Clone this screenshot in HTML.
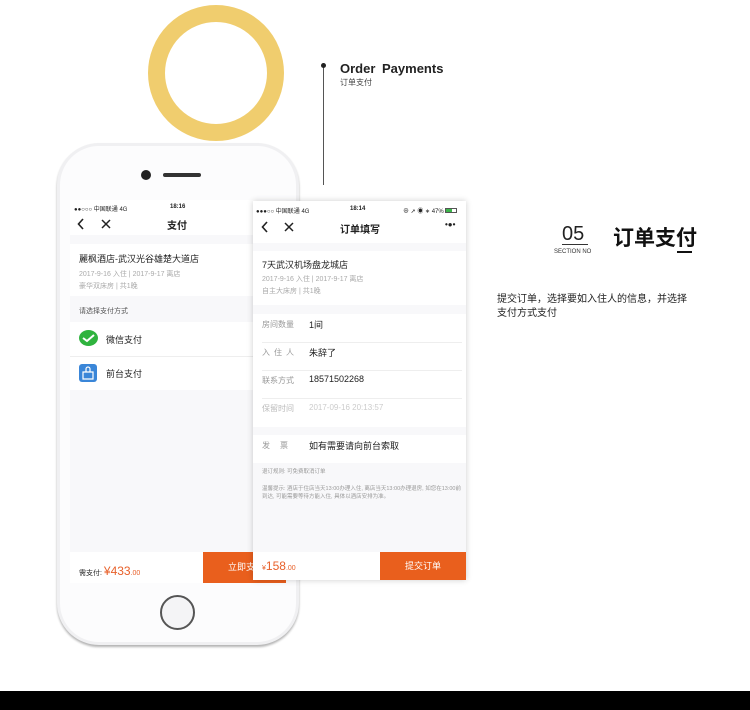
<!DOCTYPE html>
<html><head><meta charset="utf-8"><style>
*{margin:0;padding:0;box-sizing:border-box}
body{width:750px;height:710px;background:#fff;position:relative;overflow:hidden;font-family:"Liberation Sans","Noto Sans CJK SC",sans-serif;color:#222}
.a{position:absolute}
.ring{left:148px;top:5px;width:136px;height:136px;border-radius:50%;border:17px solid #f0cd6e}
.phone{left:57px;top:143px;width:242px;height:502px;border-radius:42px;background:#fcfcfd;border:3px solid #f0f0f2;box-shadow:0 2px 2px rgba(0,0,0,.3)}
.scr{background:#f8f8fa;overflow:hidden}
.t{font-size:9px}
.g{color:#aaa;font-size:7px}
.line{left:323px;top:66px;width:1px;height:119px;background:#555}
</style></head><body>
<div class="a ring"></div>
<div class="a line"></div>
<div class="a" style="left:321px;top:63px;width:5px;height:5px;border-radius:50%;background:#222"></div>
<div class="a" style="left:340px;top:61px;font-size:13px;font-weight:bold;word-spacing:3px">Order Payments</div>
<div class="a" style="left:340px;top:77px;font-size:8px;color:#444">订单支付</div>

<div class="a phone"></div>
<div class="a" style="left:141px;top:170px;width:10px;height:10px;border-radius:50%;background:#222"></div>
<div class="a" style="left:163px;top:173px;width:38px;height:4px;border-radius:2px;background:#333"></div>
<div class="a" style="left:160px;top:595px;width:35px;height:35px;border-radius:50%;border:2px solid #555;background:#f4f4f6"></div>

<!-- left screen -->
<div class="a scr" style="left:70px;top:200px;width:216px;height:383px">
 <div class="a" style="left:0;top:0;width:216px;height:35px;background:#fff"></div>
 <div class="a" style="left:4px;top:4px;font-size:6px">●●○○○ 中国联通 4G</div>
 <div class="a" style="left:100px;top:4px;font-size:6px;font-weight:bold">18:16</div>
 <svg class="a" style="left:7px;top:18px" width="8" height="12"><path d="M6 1 L1.5 6 L6 11" stroke="#222" stroke-width="1.6" fill="none"/></svg>
 <svg class="a" style="left:31px;top:19px" width="10" height="10"><path d="M1 1L9 9M9 1L1 9" stroke="#222" stroke-width="1.5"/></svg>
 <div class="a" style="left:97px;top:17px;font-size:10px;font-weight:bold">支付</div>
 <div class="a" style="left:0;top:44px;width:216px;height:52px;background:#fff"></div>
 <div class="a t" style="left:9px;top:52px">麗枫酒店-武汉光谷雄楚大道店</div>
 <div class="a g" style="left:9px;top:69px">2017-9-16 入住 | 2017-9-17 离店</div>
 <div class="a g" style="left:9px;top:81px">豪华双床房 | 共1晚</div>
 <div class="a" style="left:9px;top:106px;font-size:7px;color:#555">请选择支付方式</div>
 <div class="a" style="left:0;top:122px;width:216px;height:68px;background:#fff"></div>
 <div class="a" style="left:0;top:156px;width:216px;height:1px;background:#eee"></div>
 <div class="a" style="left:9px;top:130px;width:19px;height:16px;border-radius:50%;background:#2fb33e"></div>
 <svg class="a" style="left:12px;top:133px" width="13" height="10"><path d="M1 5 L5 8 L12 2" stroke="#fff" stroke-width="2" fill="none"/></svg>
 <div class="a t" style="left:36px;top:133px">微信支付</div>
 <div class="a" style="left:9px;top:164px;width:18px;height:18px;border-radius:3px;background:#3a86d8"></div>
 <svg class="a" style="left:12px;top:166px" width="12" height="14"><path d="M1 6H11V13H1Z M4 6V3 A2 2 0 0 1 8 3V6" stroke="#fff" stroke-width="1.2" fill="none"/></svg>
 <div class="a t" style="left:36px;top:167px">前台支付</div>
 <div class="a" style="left:0;top:352px;width:216px;height:31px;background:#fff"></div>
 <div class="a" style="left:9px;top:364px;font-size:7px">需支付: <span style="color:#e8602a;font-size:12px">¥433</span><span style="color:#e8602a;font-size:7px">.00</span></div>
 <div class="a" style="left:133px;top:352px;width:83px;height:31px;background:#e95f1d;color:#fff;font-size:9px;line-height:31px;padding-left:25px">立即支付</div>
</div>

<!-- right screen -->
<div class="a scr" style="left:253px;top:201px;width:213px;height:379px;box-shadow:0 0 6px rgba(0,0,0,.2)">
 <div class="a" style="left:0;top:0;width:213px;height:42px;background:#fff"></div>
 <div class="a" style="left:3px;top:5px;font-size:6px">●●●○○ 中国联通 4G</div>
 <div class="a" style="left:97px;top:5px;font-size:6px;font-weight:bold">18:14</div>
 <div class="a" style="left:150px;top:5px;font-size:6px">⊕ ➚ ◉ ∗ 47% <span style="display:inline-block;width:12px;height:5px;border:1px solid #555;background:linear-gradient(90deg,#3bb54a 60%,#fff 60%)"></span></div>
 <svg class="a" style="left:8px;top:20px" width="8" height="12"><path d="M6 1 L1.5 6 L6 11" stroke="#222" stroke-width="1.6" fill="none"/></svg>
 <svg class="a" style="left:31px;top:21px" width="10" height="10"><path d="M1 1L9 9M9 1L1 9" stroke="#222" stroke-width="1.5"/></svg>
 <div class="a" style="left:87px;top:20px;font-size:10px;font-weight:bold">订单填写</div>
 <div class="a" style="left:192px;top:19px;font-size:8px;font-weight:bold">•●•</div>
 <div class="a" style="left:0;top:50px;width:213px;height:54px;background:#fff"></div>
 <div class="a t" style="left:9px;top:57px">7天武汉机场盘龙城店</div>
 <div class="a g" style="left:9px;top:73px">2017-9-16 入住 | 2017-9-17 离店</div>
 <div class="a g" style="left:9px;top:85px">自主大床房 | 共1晚</div>
 <div class="a" style="left:0;top:113px;width:213px;height:113px;background:#fff"></div>
 <div class="a" style="left:9px;top:141px;width:200px;height:1px;background:#eee"></div>
 <div class="a" style="left:9px;top:169px;width:200px;height:1px;background:#eee"></div>
 <div class="a" style="left:9px;top:197px;width:200px;height:1px;background:#eee"></div>
 <div class="a" style="left:9px;top:118px;font-size:8px;color:#999">房间数量</div><div class="a t" style="left:56px;top:117px">1间</div>
 <div class="a" style="left:9px;top:146px;font-size:8px;color:#999;letter-spacing:4px">入住人</div><div class="a t" style="left:56px;top:145px">朱辞了</div>
 <div class="a" style="left:9px;top:174px;font-size:8px;color:#999">联系方式</div><div class="a t" style="left:56px;top:173px">18571502268</div>
 <div class="a" style="left:9px;top:202px;font-size:8px;color:#bbb">保留时间</div><div class="a" style="left:56px;top:202px;font-size:8px;color:#ccc">2017-09-16 20:13:57</div>
 <div class="a" style="left:0;top:234px;width:213px;height:28px;background:#fff"></div>
 <div class="a" style="left:9px;top:239px;font-size:8px;color:#999;letter-spacing:10px">发票</div><div class="a t" style="left:56px;top:238px">如有需要请向前台索取</div>
 <div class="a" style="left:9px;top:266px;font-size:5.5px;color:#999">退订规则: 可免费取消订单</div>
 <div class="a" style="left:9px;top:284px;font-size:5.5px;color:#999;line-height:8px;width:200px">温馨提示: 酒店于住店当天13:00办理入住, 离店当天13:00办理退房, 如您在13:00前到达, 可能需要等待方能入住, 具体以酒店安排为准。</div>
 <div class="a" style="left:0;top:351px;width:213px;height:28px;background:#fff"></div>
 <div class="a" style="left:9px;top:358px;color:#e8602a;font-size:7px">¥<span style="font-size:12px">158</span>.00</div>
 <div class="a" style="left:127px;top:351px;width:86px;height:28px;background:#e95f1d;color:#fff;font-size:9px;line-height:28px;text-align:center">提交订单</div>
</div>

<div class="a" style="left:562px;top:223px;font-size:20px;color:#222">05</div>
<div class="a" style="left:562px;top:244px;width:26px;height:1px;background:#333"></div>
<div class="a" style="left:554px;top:249px;font-size:6px;color:#333">SECTION NO</div>
<div class="a" style="left:613px;top:222px;font-size:21px;font-weight:bold;color:#111">订单支付</div>
<div class="a" style="left:677px;top:251px;width:15px;height:2px;background:#111"></div>
<div class="a" style="left:497px;top:293px;font-size:10px;line-height:14px;color:#222;width:220px">提交订单，选择要如入住人的信息，并选择<br>支付方式支付</div>

<div class="a" style="left:0;top:691px;width:750px;height:19px;background:#000"></div>
</body></html>
